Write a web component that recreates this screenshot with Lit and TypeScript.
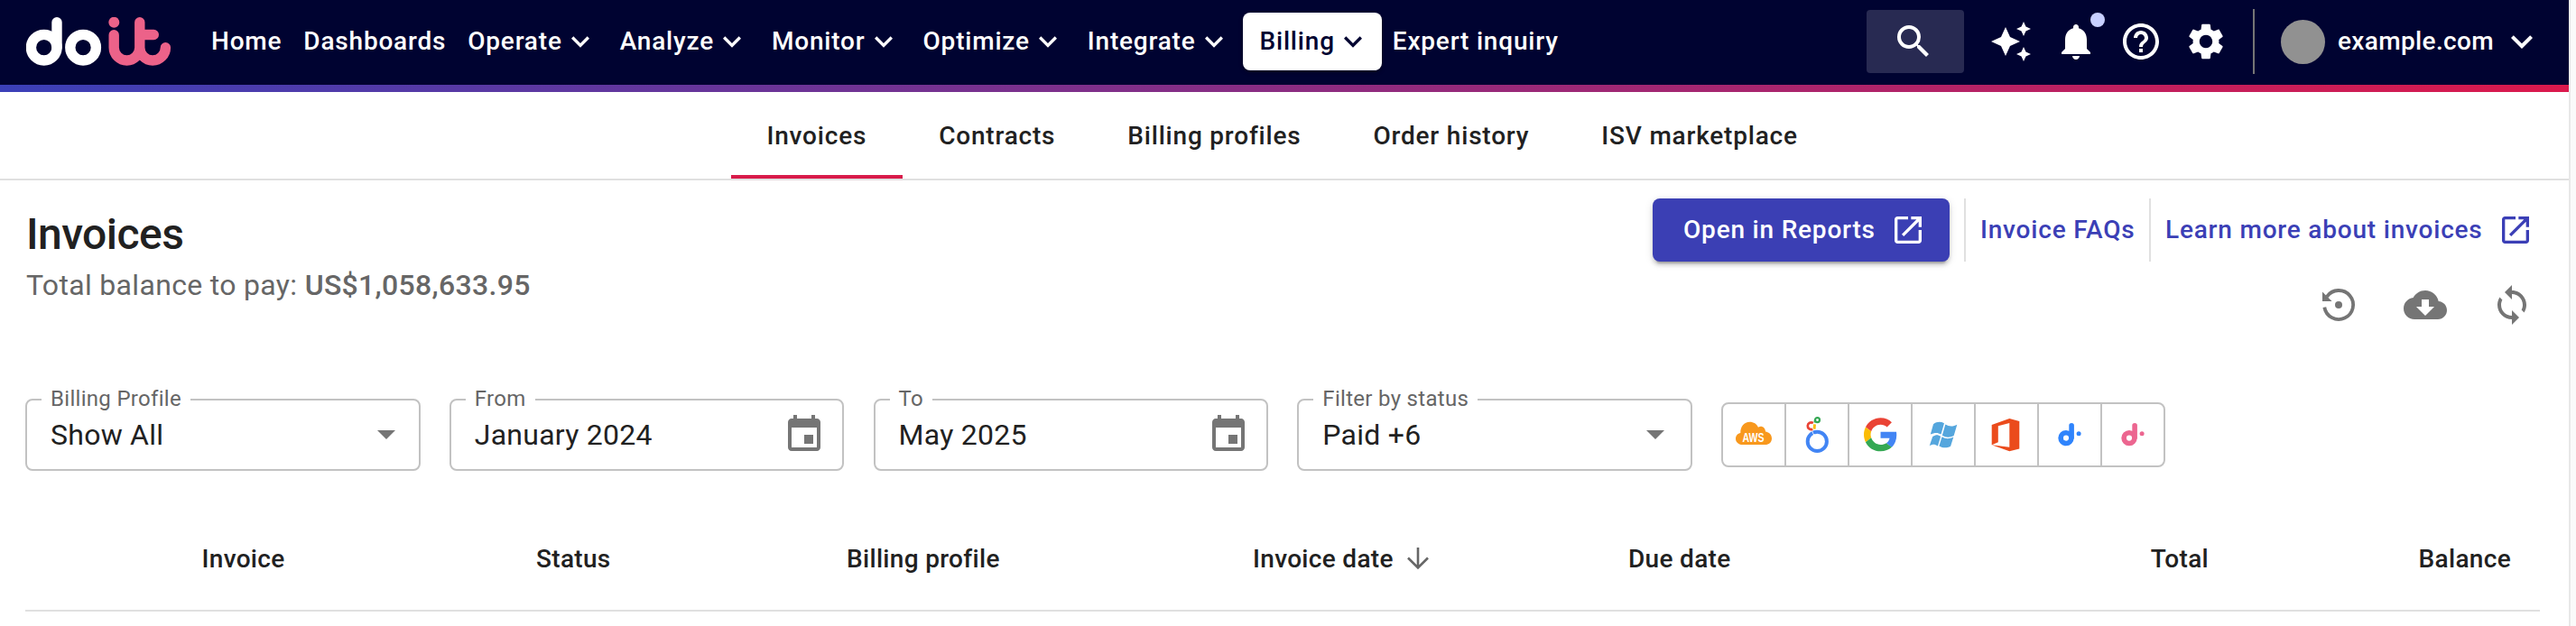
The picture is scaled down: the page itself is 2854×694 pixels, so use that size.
import { LitElement, html, svg, css, nothing } from "lit";

const ICONS: Record<string, string> = {
  chevron: "M7.41 8.59 12 13.17l4.59-4.58L18 10l-6 6-6-6z",
  search:
    "M15.5 14h-.79l-.28-.27A6.471 6.471 0 0 0 16 9.5 6.5 6.5 0 1 0 9.5 16c1.61 0 3.09-.59 4.23-1.57l.27.28v.79l5 4.99L20.49 19l-4.99-5zm-6 0C7.01 14 5 11.99 5 9.5S7.01 5 9.5 5 14 7.01 14 9.5 11.99 14 9.5 14z",
  sparkle:
    "M19 9l1.25-2.75L23 5l-2.75-1.25L19 1l-1.25 2.75L15 5l2.75 1.25L19 9zm-7.500.5L9 4 6.500 9.500 1 12l5.500 2.500L9 20l2.500-5.500L17 12l-5.500-2.500zM19 15l-1.250 2.750L15 19l2.750 1.250L19 23l1.250-2.750L23 19l-2.750-1.250L19 15z",
  bell: "M12 22c1.1 0 2-.9 2-2h-4c0 1.1.9 2 2 2zm6-6v-5c0-3.07-1.63-5.64-4.5-6.32V4c0-.83-.67-1.5-1.5-1.5s-1.5.67-1.5 1.5v.68C7.64 5.36 6 7.92 6 11v5l-2 2v1h16v-1l-2-2z",
  help: "M11 18h2v-2h-2v2zm1-16C6.48 2 2 6.48 2 12s4.48 10 10 10 10-4.48 10-10S17.52 2 12 2zm0 18c-4.41 0-8-3.59-8-8s3.59-8 8-8 8 3.59 8 8-3.59 8-8 8zm0-14c-2.21 0-4 1.79-4 4h2c0-1.1.9-2 2-2s2 .9 2 2c0 2-3 1.75-3 5h2c0-2.25 3-2.5 3-5 0-2.21-1.79-4-4-4z",
  gear: "M19.14 12.94c.04-.3.06-.61.06-.94 0-.32-.02-.64-.07-.94l2.03-1.58c.18-.14.23-.41.12-.61l-1.92-3.32c-.12-.22-.37-.29-.59-.22l-2.39.96c-.5-.38-1.03-.7-1.62-.94l-.36-2.54c-.04-.24-.24-.41-.48-.41h-3.84c-.24 0-.43.17-.47.41l-.36 2.54c-.59.24-1.13.57-1.62.94l-2.39-.96c-.22-.08-.47 0-.59.22L2.74 8.87c-.12.21-.08.47.12.61l2.03 1.58c-.05.3-.09.63-.09.94s.02.64.07.94l-2.03 1.58c-.18.14-.23.41-.12.61l1.92 3.32c.12.22.37.29.59.22l2.39-.96c.5.38 1.03.7 1.62.94l.36 2.54c.05.24.24.41.48.41h3.84c.24 0 .44-.17.47-.41l.36-2.54c.59-.24 1.13-.56 1.62-.94l2.39.96c.22.08.47 0 .59-.22l1.92-3.32c.12-.22.07-.47-.12-.61l-2.01-1.58zM12 15.6c-1.98 0-3.6-1.62-3.6-3.6s1.62-3.6 3.6-3.6 3.6 1.62 3.6 3.6-1.62 3.6-3.6 3.6z",
  open: "M19 19H5V5h7V3H5c-1.11 0-2 .9-2 2v14c0 1.1.89 2 2 2h14c1.1 0 2-.9 2-2v-7h-2v7zM14 3v2h3.59l-9.83 9.83 1.41 1.41L19 6.41V10h2V3h-7z",
  cloud:
    "M19.35 10.04C18.67 6.59 15.64 4 12 4 9.11 4 6.6 5.64 5.35 8.04 2.34 8.36 0 10.91 0 14c0 3.31 2.69 6 6 6h13c2.76 0 5-2.24 5-5 0-2.64-2.05-4.78-4.65-4.96zM17 13l-5 5-5-5h3V9h4v4h3z",
  sync: "M12 4V1L8 5l4 4V6c3.31 0 6 2.69 6 6 0 1.01-.25 1.97-.7 2.8l1.46 1.46C19.54 15.03 20 13.57 20 12c0-4.42-3.58-8-8-8zm0 14c-3.31 0-6-2.69-6-6 0-1.01.25-1.97.7-2.8L5.24 7.74C4.46 8.97 4 10.43 4 12c0 4.42 3.58 8 8 8v3l4-4-4-4v3z",
  calendar:
    "M17 12h-5v5h5v-5zM16 1v2H8V1H6v2H5c-1.11 0-1.99.9-1.99 2L3 19c0 1.1.89 2 2 2h14c1.1 0 2-.9 2-2V5c0-1.1-.9-2-2-2h-1V1h-2zm3 18H5V8h14v11z",
};

class DcIcon extends LitElement {
  static properties = { name: {}, size: { type: Number } };
  static styles = css`
    :host { display: block; flex: none; line-height: 0; }
    svg { display: block; }
  `;
  declare name: string;
  declare size: number;
  render() {
    return html`<svg width=${this.size} height=${this.size} viewBox="0 0 24 24" fill="currentColor">
      ${this.name === "restore"
        ? svg`<path d="M4.15 13.3A8 8 0 1 0 5.5 7.4" fill="none" stroke="currentColor" stroke-width="1.9"/>
              <path d="M3 4.7V10h5.3z"/><circle cx="12" cy="12" r="2"/>`
        : svg`<path d=${ICONS[this.name]}/>`}
    </svg>`;
  }
}
customElements.define("dc-icon", DcIcon);

const doit = (c: string) => svg`
  <g fill="none" stroke=${c} stroke-width="5.6" stroke-linecap="round">
    <circle cx="16" cy="23.6" r="5.9"/><path d="M22.1 9.8V23"/>
  </g><circle cx="30.1" cy="18.8" r="2.5" fill=${c}/>`;

const VENDORS = [
  svg`<path fill="#f8981d" d="M8 31C3.500 31 0 28.400 0 24.400c0-3.400 2.400-5.700 5.300-6.300C5 11 9.500 5.700 15.500 5.700c4.300 0 8 2.200 9.500 6 3.700-2.200 7.600.2 8 4.700C37.200 17 40 20 40 24c0 4.400-3.300 7-7.300 7z"/>
    <text class="aws" x="7.500" y="27.600" textLength="24" lengthAdjust="spacingAndGlyphs">AWS</text>`,
  svg`<g fill="none">
    <circle cx="20.300" cy="27.400" r="10.600" stroke="#4285f4" stroke-width="4"/>
    <path d="M13.700 13.500l3.800 8" stroke="#fff" stroke-width="1.300"/>
    <path d="M16.300 15.800l1.300 3" stroke="#4285f4" stroke-width="2.400"/>
    <path d="M15.800 7A3.900 3.900 0 1 0 15.300 13.800" stroke="#ea4335" stroke-width="2.700"/>
    <path d="M17.500 8.400l-.4 5.300" stroke="#fbbc04" stroke-width="2.900"/>
    <circle cx="20.500" cy="3.600" r="2.500" stroke="#34a853" stroke-width="2.200"/>
    <path d="M17.600 3.500v3" stroke="#34a853" stroke-width="1.800"/></g>`,
  svg`<g transform="translate(2 1.300) scale(.772)">
    <path fill="#ea4335" d="M24 9.500c3.540 0 6.710 1.220 9.210 3.600l6.850-6.850C35.900 2.380 30.470 0 24 0 14.620 0 6.510 5.380 2.560 13.220l7.980 6.190C12.430 13.720 17.740 9.500 24 9.500z"/>
    <path fill="#4285f4" d="M46.980 24.550c0-1.570-.15-3.090-.38-4.550H24v9.020h12.940c-.58 2.960-2.260 5.480-4.780 7.180l7.730 6c4.510-4.180 7.090-10.360 7.090-17.650z"/>
    <path fill="#fbbc05" d="M10.530 28.590c-.48-1.450-.76-2.990-.76-4.590s.27-3.140.76-4.590l-7.980-6.190C.92 16.460 0 20.120 0 24c0 3.880.92 7.540 2.560 10.780l7.970-6.190z"/>
    <path fill="#34a853" d="M24 48c6.480 0 11.930-2.130 15.890-5.810l-7.730-6c-2.150 1.450-4.920 2.300-8.160 2.300-6.260 0-11.570-4.220-13.470-9.910l-7.980 6.190C6.510 42.620 14.620 48 24 48z"/></g>`,
  svg`<g fill="#55a6dd">
    <path d="M9 8.200c4-2.900 8-3.100 12-.9l-3.500 12.300c-3.600-2.300-7.300-2.200-11.700 0z"/>
    <path d="M22.300 8.500c4.200 2.500 8.500 2.600 13 .2l-3.600 12.400c-4.600 2.300-8.800 2.200-12.900-.3z"/>
    <path d="M8.200 22.100c4-2.600 5.500-2.500 9-.4l-3.300 10.700c-3.500-2.300-5.600-2.200-9.200-.2z"/>
    <path d="M18.500 22.300c4.200 2.500 8.200 2.400 12.800.2l-3.200 10.200c-4.400 2.300-8.600 2.100-12.700-.3z"/></g>`,
  svg`<path fill="#eb4b1c" d="M3.700 8.900 23.300 2l11 3v30.400l-11 2.800L3.700 31.300l19.600 2.400V7L10.800 10.200v18L3.700 31.300z"/>`,
  doit("#2f84fc"),
  doit("#ec6690"),
];

const NAV: [string, boolean][] = [
  ["Home", false], ["Dashboards", false], ["Operate", true], ["Analyze", true], ["Monitor", true],
  ["Optimize", true], ["Integrate", true], ["Billing", true], ["Expert inquiry", false],
];
const TABS = ["Invoices", "Contracts", "Billing profiles", "Order history", "ISV marketplace"];
const FIELDS: [string, string, string][] = [
  ["Billing Profile", "Show All", "caret"], ["From", "January 2024", "date"],
  ["To", "May 2025", "date"], ["Filter by status", "Paid +6", "caret wide"],
];

class AppRoot extends LitElement {
  static styles = css`
    :host {
      display: flex; width: 100%; height: 694px; overflow: hidden; background: #fff; color: #212121;
      font: 500 28px Roboto, sans-serif; white-space: nowrap;
    }
    * { box-sizing: border-box; }
    .page { flex: 1; min-width: 0; }
    .gutter { width: 8px; flex: none; background: #fafafa; border-left: 2px solid #e8e8e8; }

    .topbar {
      display: flex; align-items: center; height: 94px; padding: 0 28px 2px 29px;
      background: #000331; color: #fff;
    }
    .logo { flex: none; display: block; width: 161px; height: 54px; }
    nav { display: flex; align-items: center; margin-left: 32px; letter-spacing: .8px; }
    .nav { display: flex; align-items: center; height: 64px; padding: 0 12px; }
    .label { display: block; padding-bottom: 2px; }
    .nav.on { padding-left: 19px; border-radius: 8px; background: #fff; color: #000331; box-shadow: 0 2px 4px #0006; }
    .tools { display: flex; align-items: center; margin-left: auto; }
    .search {
      display: grid; place-items: center; width: 108px; height: 70px; margin-right: 28px;
      padding-right: 4px; border-radius: 4px; background: #282a52;
    }
    .actions { display: flex; gap: 24px; }
    .alert { position: relative; }
    .dot { position: absolute; left: 40px; top: -8px; width: 16px; height: 16px; border-radius: 50%; background: #c8d0ff; }
    .rule { width: 2px; height: 72px; margin: 0 29px 0 28px; background: #757575; }
    .avatar { width: 49px; height: 49px; border-radius: 50%; background: #919191; }
    .domain { width: 173px; margin: 0 7px 0 14px; padding-bottom: 2px; letter-spacing: .35px; }
    .stripe { height: 8px; background: linear-gradient(90deg, #3b40b8, #db194c); }

    .tabs { display: flex; height: 98px; padding-left: 809.500px; border-bottom: 2px solid #e0e0e0; letter-spacing: .8px; }
    .tab { display: flex; align-items: center; padding: 0 40px; border: solid transparent; border-width: 4px 0; }
    .tab.on { border-bottom-color: #d81b4a; }

    .intro { display: flex; justify-content: space-between; height: 242px; padding: 20px 39px 0 28px; }
    h1 { margin: 8px 0 0; font: 500 48px/64px Roboto, sans-serif; letter-spacing: -.55px; padding-left: 1px; }
    .total { font-weight: 400; font-size: 32px; line-height: 48px; letter-spacing: .32px; color: #666; padding-left: 1px; }
    .total b { font-weight: 500; }
    .links { display: flex; align-items: center; height: 70px; color: #3b3fb6; letter-spacing: .8px; }
    .cta {
      display: flex; align-items: center; justify-content: space-between; width: 329px; height: 70px;
      padding: 0 26px 0 34px; border-radius: 8px; background: #3b3fb4; color: #fff;
      box-shadow: 0 6px 2px -4px #0003, 0 4px 4px #00000024, 0 2px 10px #0000001f;
    }
    .bar { width: 2px; height: 70px; margin: 0 16px; background: #e0e0e0; }
    .bar.tight { margin-left: 0; }
    .faq { width: 187px; }
    .learn { display: flex; align-items: center; justify-content: space-between; width: 408px; }
    .icons { display: flex; justify-content: flex-end; gap: 48px; margin-top: 24px; color: #757575; }

    .filters { display: flex; align-items: center; gap: 32.200px; height: 80px; padding-left: 28px; }
    fieldset {
      display: flex; align-items: center; justify-content: space-between; width: 437.600px; height: 80px;
      margin: 0; padding: 0 18px 0 26px; border: 2px solid #c2c2c2; border-radius: 8px; min-width: 0;
      font-weight: 400; font-size: 32px; letter-spacing: .25px; color: #212121;
    }
    legend { height: 2px; margin-left: -10px; padding: 0 10px 2px; line-height: 0; font-size: 24px; letter-spacing: .3px; color: #666; }
    .value { line-height: 76px; }
    .caret { margin-right: 8px; border: 10px solid transparent; border-top-color: #757575; border-bottom: 0; }
    .caret.wide { margin-right: 11px; }
    .date-icon { color: #757575; }
    .vendors { display: flex; height: 72px; border: 2px solid #c2c2c2; border-radius: 8px; }
    .vendor { display: grid; place-items: center; width: 70px; border-right: 2px solid #c2c2c2; }
    .vendor:last-child { width: 68px; border: 0; }
    .aws { font: 700 14px "Liberation Sans", sans-serif; fill: #fff; }

    .thead {
      display: grid; align-items: center; height: 114px; margin: 42px 32px 0 28px; padding-bottom: 2px;
      border-bottom: 2px solid #e0e0e0;
      grid-template-columns: 566px 344px 450px 416px 500px 1fr 367px; letter-spacing: .32px;
    }
    .first { padding-left: 195.500px; }
    .date { display: flex; align-items: center; gap: 14px; }
    .end { text-align: right; }
    .last { padding-right: 32px; }
  `;

  icon(name: string, size = 48) {
    return html`<dc-icon name=${name} .size=${size}></dc-icon>`;
  }

  render() {
    return html`
      <div class="page">
        <header class="topbar">
          <svg class="logo" viewBox="0 0 161 54" fill="none" stroke-width="11.400" stroke-linecap="round" stroke-linejoin="round">
            <g stroke="#fff"><circle cx="19.700" cy="33.700" r="14.300"/><path d="M34 5.700v28"/><circle cx="63.100" cy="33.700" r="14.300"/></g>
            <circle cx="97.300" cy="5.800" r="6" fill="#ec6289"/>
            <path stroke="#ec6289" d="M97.200 19.700v14a14.300 14.300 0 0 0 28.600 0a14.300 14.300 0 0 0 28.600 0M125.800 5.700v28M125.800 19.500h15.500"/>
          </svg>
          <nav>
            ${NAV.map(([t, menu]) => html`<div class="nav ${t === "Billing" ? "on" : ""}"><span class="label">${t}</span>${menu ? this.icon("chevron", 40) : nothing}</div>`)}
          </nav>
          <div class="tools">
            <div class="search">${this.icon("search")}</div>
            <div class="actions">
              ${this.icon("sparkle")}
              <div class="alert">${this.icon("bell")}<span class="dot"></span></div>
              ${this.icon("help")}${this.icon("gear")}
            </div>
            <div class="rule"></div>
            <div class="avatar"></div>
            <div class="domain">example.com</div>
            ${this.icon("chevron")}
          </div>
        </header>
        <div class="stripe"></div>
        <div class="tabs">${TABS.map((t, i) => html`<div class="tab ${i ? "" : "on"}">${t}</div>`)}</div>
        <section class="intro">
          <div>
            <h1>Invoices</h1>
            <div class="total">Total balance to pay: <b>US$1,058,633.95</b></div>
          </div>
          <div>
            <div class="links">
              <div class="cta"><span class="label">Open in Reports</span>${this.icon("open", 40)}</div>
              <div class="bar"></div>
              <div class="faq label">Invoice FAQs</div>
              <div class="bar tight"></div>
              <div class="learn"><span class="label">Learn more about invoices</span>${this.icon("open", 40)}</div>
            </div>
            <div class="icons">${this.icon("restore")}${this.icon("cloud")}${this.icon("sync")}</div>
          </div>
        </section>
        <section class="filters">
          ${FIELDS.map(([label, value, kind]) => html`<fieldset>
            <legend>${label}</legend>
            <span class="value">${value}</span>
            ${kind === "date" ? html`<span class="date-icon">${this.icon("calendar")}</span>` : html`<span class=${kind}></span>`}
          </fieldset>`)}
          <div class="vendors">
            ${VENDORS.map((v) => html`<div class="vendor"><svg width="40" height="40" viewBox="0 0 40 40">${v}</svg></div>`)}
          </div>
        </section>
        <section class="thead">
          <div class="first">Invoice</div>
          <div>Status</div>
          <div>Billing profile</div>
          <div class="date">Invoice date
            <svg width="26" height="26" viewBox="0 0 26 26" fill="none" stroke="#666" stroke-width="2.600"><path d="M13 1v22M2 12.500l11 11 11-11"/></svg>
          </div>
          <div>Due date</div>
          <div class="end">Total</div>
          <div class="end last">Balance</div>
        </section>
      </div>
      <div class="gutter"></div>
    `;
  }
}
customElements.define("app-root", AppRoot);
